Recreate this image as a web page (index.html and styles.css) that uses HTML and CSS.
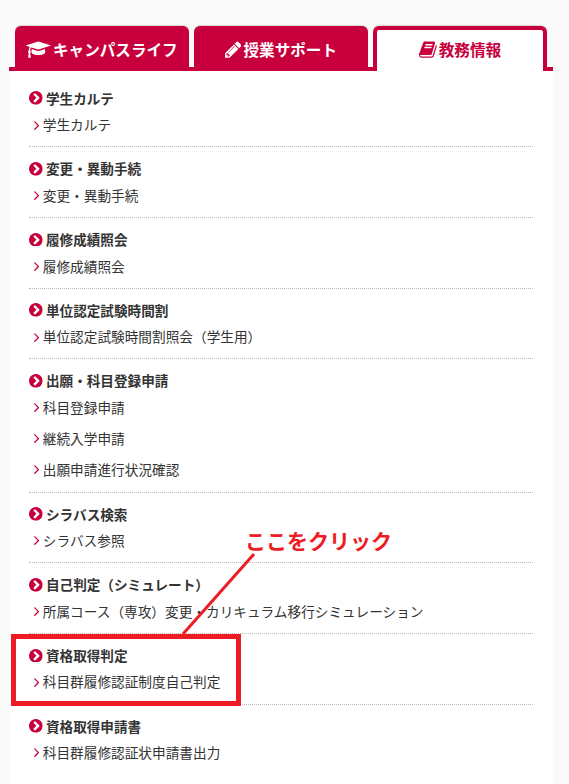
FILE: index.html
```html
<!DOCTYPE html>
<html lang="ja">
<head>
  <meta charset="UTF-8">
  <meta name="viewport" content="width=device-width, initial-scale=1.0">
  <title>教務情報</title>
  <link rel="stylesheet" href="styles.css">
</head>
<body>
  <svg class="defs" width="0" height="0">
    <symbol id="circle-right" viewBox="128 128 1536 1536">
      <path d="M845 1395l454-454q19-19 19-45t-19-45l-454-454q-19-19-45-19t-45 19l-102 102q-19 19-19 45t19 45l307 307-307 307q-19 19-19 45t19 45l102 102q19 19 45 19t45-19zm819-499q0 209-103 385.5t-279.5 279.5-385.5 103-385.5-103-279.5-279.5-103-385.5 103-385.5 279.5-279.5 385.5-103 385.5 103 279.5 279.5 103 385.5z"/>
    </symbol>
    <symbol id="angle-right" viewBox="589 448 582 1024">
      <path d="M1171 960q0 13-10 23l-466 466q-10 10-23 10t-23-10l-50-50q-10-10-10-23t10-23l393-393-393-393q-10-10-10-23t10-23l50-50q10-10 23-10t23 10l466 466q10 10 10 23z"/>
    </symbol>
  </svg>

  <div class="container">
    <ul class="tabs">
      <li class="tab">
        <svg class="icon-cap" viewBox="0 0 2304 1792"><path d="M1774 836l18 316q4 69-82 128t-235 93.5-323 34.5-323-34.5-235-93.5-82-128l18-316 574 181q22 7 48 7t48-7zm530-324q0 23-22 31l-1120 352q-4 1-10 1t-10-1l-652-206q-43 34-71 111.5t-34 178.5q63 36 63 109 0 69-58 107l58 433q2 14-8 25-9 11-24 11h-192q-15 0-24-11-10-11-8-25l58-433q-58-38-58-107 0-73 65-111 11-207 98-330l-333-104q-22-8-22-31t22-31l1120-352q4-1 10-1t10 1l1120 352q22 8 22 31z"/></svg>
        <span>キャンパスライフ</span>
      </li>
      <li class="tab">
        <svg class="icon-pencil" viewBox="128 0 1536 1792"><path d="M491 1536l91-91-235-235-91 91v107h128v128h107zm523-928q0-22-22-22-10 0-17 7l-542 542q-7 7-7 17 0 22 22 22 10 0 17-7l542-542q7-7 7-17zm-54-192l416 416-832 832h-416v-416zm683 96q0 53-37 90l-166 166-416-416 166-165q36-38 90-38 53 0 91 38l235 234q37 39 37 91z"/></svg>
        <span>授業サポート</span>
      </li>
      <li class="tab active">
        <svg class="icon-book" viewBox="64 0 1664 1792"><path d="M1703 478q40 57 18 129l-275 906q-19 64-76.5 107.5t-122.5 43.5h-923q-77 0-148.5-53.5t-99.5-131.5q-24-67-2-127 0-4 3-27t4-37q1-8-3-21.5t-3-19.5q2-11 8-21t16.5-23.5 16.5-23.5q23-38 45-91.5t30-91.5q3-10 .5-30t-.5-28q3-11 17-28t17-23q21-36 42-92t25-90q1-9-2.5-32t.5-28q4-13 22-30.5t22-22.5q19-26 42.5-84.5t27.5-96.5q1-8-3-25.5t-2-26.5q2-8 9-18t18-23 17-21q8-12 16.5-30.5t15-35 16-36 19.5-32 26.5-23.5 36-11.5 47.5 5.5l-1 3q38-9 51-9h761q74 0 114 56t18 130l-274 906q-36 119-71.5 153.5t-128.5 34.5h-869q-27 0-38 15-11 16-1 43 24 70 144 70h923q29 0 56-15.5t35-41.5l300-987q7-22 5-57 38 15 59 43zm-1064 2q-4 13 2 22.5t20 9.5h608q13 0 25.5-9.5t16.5-22.5l21-64q4-13-2-22.5t-20-9.5h-608q-13 0-25.5 9.5t-16.5 22.5zm-83 256q-4 13 2 22.5t20 9.5h608q13 0 25.5-9.5t16.5-22.5l21-64q4-13-2-22.5t-20-9.5h-608q-13 0-25.5 9.5t-16.5 22.5z"/></svg>
        <span>教務情報</span>
      </li>
    </ul>

    <div class="panel">
      <section class="group">
        <h3><svg><use href="#circle-right"/></svg>学生カルテ</h3>
        <ul>
          <li><svg><use href="#angle-right"/></svg>学生カルテ</li>
        </ul>
      </section>
      <section class="group">
        <h3><svg><use href="#circle-right"/></svg>変更・異動手続</h3>
        <ul>
          <li><svg><use href="#angle-right"/></svg>変更・異動手続</li>
        </ul>
      </section>
      <section class="group">
        <h3><svg><use href="#circle-right"/></svg>履修成績照会</h3>
        <ul>
          <li><svg><use href="#angle-right"/></svg>履修成績照会</li>
        </ul>
      </section>
      <section class="group">
        <h3><svg><use href="#circle-right"/></svg>単位認定試験時間割</h3>
        <ul>
          <li><svg><use href="#angle-right"/></svg>単位認定試験時間割照会（学生用）</li>
        </ul>
      </section>
      <section class="group">
        <h3><svg><use href="#circle-right"/></svg>出願・科目登録申請</h3>
        <ul>
          <li><svg><use href="#angle-right"/></svg>科目登録申請</li>
          <li><svg><use href="#angle-right"/></svg>継続入学申請</li>
          <li><svg><use href="#angle-right"/></svg>出願申請進行状況確認</li>
        </ul>
      </section>
      <section class="group">
        <h3><svg><use href="#circle-right"/></svg>シラバス検索</h3>
        <ul>
          <li><svg><use href="#angle-right"/></svg>シラバス参照</li>
        </ul>
      </section>
      <section class="group">
        <h3><svg><use href="#circle-right"/></svg>自己判定（シミュレート）</h3>
        <ul>
          <li><svg><use href="#angle-right"/></svg>所属コース（専攻）変更・カリキュラム移行シミュレーション</li>
        </ul>
      </section>
      <section class="group">
        <h3><svg><use href="#circle-right"/></svg>資格取得判定</h3>
        <ul>
          <li><svg><use href="#angle-right"/></svg>科目群履修認証制度自己判定</li>
        </ul>
      </section>
      <section class="group">
        <h3><svg><use href="#circle-right"/></svg>資格取得申請書</h3>
        <ul>
          <li><svg><use href="#angle-right"/></svg>科目群履修認証状申請書出力</li>
        </ul>
      </section>
    </div>
  </div>

  <!-- callout over the list -->
  <div class="callout-box"></div>
  <svg class="callout-line" viewBox="0 0 76 84"><path d="M74 2L3 82"/></svg>
  <div class="callout-text">ここをクリック</div>
</body>
</html>
```
FILE: styles.css
```css
* {
  box-sizing: border-box;
}

body {
  position: relative;
  height: 784px;
  margin: 0;
  padding: 26px 16px 0 9px;
  overflow: hidden;
  background-color: #fafafa;
  color: #333;
  font-family: "Noto Sans CJK JP", sans-serif;
  font-size: 13.66px;
}

ul {
  list-style: none;
  margin: 0;
  padding: 0;
}

svg {
  flex: none;
  fill: currentColor;
}

.defs {
  position: absolute;
}

.container {
  width: 544px;
}

.tabs {
  display: flex;
  gap: 5px;
  height: 45px;
  padding: 0 6px;
  background: linear-gradient(#c7003d, #c7003d) bottom / 100% 4px no-repeat;
}

.tab {
  display: flex;
  flex: none;
  align-items: center;
  justify-content: center;
  gap: 2px;
  width: 174px;
  border-radius: 6px 6px 0 0;
  box-shadow: 0 -1px 1px rgba(0, 0, 0, 0.15);
  background-color: #c7003d;
  color: #fff;
  font-size: 15.6px;
  font-weight: bold;
  white-space: nowrap;
}

.tab.active {
  padding-bottom: 4px;
  border: 4px solid #c7003d;
  border-bottom: 0;
  background-color: #fff;
  color: #c7003d;
}

.tab svg {
  margin-top: 2px;
}

.icon-cap {
  width: 24.7px;
  height: 19.2px;
}

.icon-pencil {
  width: 16.5px;
  height: 19.2px;
}

.icon-book {
  width: 17.8px;
  height: 19.2px;
}

.panel {
  height: 713px;
  padding: 5.78px 20px 0;
  background-color: #fff;
}

.group {
  height: 70.67px;
  padding-top: 9px;
  border-bottom: 1px dotted #bbb;
}

.group:nth-child(5) {
  height: 133.17px;
}

.group:last-child {
  border-bottom: 0;
}

.group h3 {
  display: flex;
  align-items: center;
  gap: 3.3px;
  height: 24px;
  margin: 0;
  font-size: 13.6px;
  font-weight: bold;
}

.group h3 svg {
  width: 13.7px;
  height: 13.7px;
  margin-top: 1px;
  color: #c7003d;
}

.group li {
  display: flex;
  align-items: center;
  gap: 3.6px;
  height: 31px;
  padding-left: 5px;
  padding-bottom: 2px;
}

.group li svg {
  width: 5.2px;
  height: 9.2px;
  margin-top: 2px;
  color: #c7003d;
}

.callout-box {
  position: absolute;
  left: 11px;
  top: 634px;
  width: 230px;
  height: 72px;
  border: 5px solid #ed1c24;
}

.callout-line {
  position: absolute;
  left: 180px;
  top: 552px;
  width: 76px;
  height: 84px;
  fill: none;
  stroke: #ed1c24;
  stroke-width: 3;
}

.callout-text {
  position: absolute;
  left: 245px;
  top: 525px;
  color: #ed1c24;
  font-size: 21px;
  font-weight: bold;
  line-height: 30px;
  white-space: nowrap;
}
```
